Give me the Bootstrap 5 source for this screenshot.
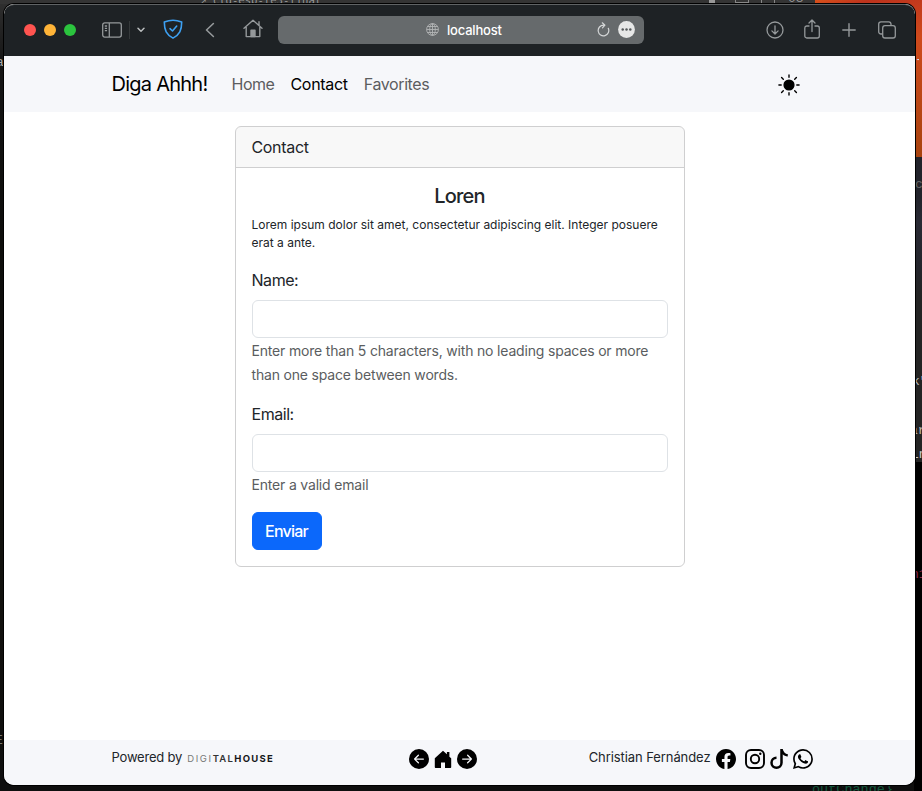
<!DOCTYPE html>
<html lang="en">
<head>
<meta charset="utf-8">
<meta name="viewport" content="width=device-width, initial-scale=1">
<title>Diga Ahhh! - Contact</title>
<link href="https://cdn.jsdelivr.net/npm/bootstrap@5.3.0/dist/css/bootstrap.min.css" rel="stylesheet">
<style>
body{font-family:Inter,"Liberation Sans",sans-serif;background:#0d0d0c;height:791px;overflow:hidden;letter-spacing:-.45px}
svg{display:block;flex:none}
.desktop{width:922px;height:791px;padding:4px 7px 6px 4px;background:linear-gradient(#303030 0,#151515 8%,#0d0d0b 30%,#12110d 70%,#0e0e0e 100%)}
.bg-piece{position:absolute;overflow:hidden;white-space:pre;font-family:"Liberation Mono",monospace;font-size:13px;letter-spacing:0;line-height:16px}
.bg-top{left:0;top:0;width:816px;height:4px;background:#343434}
.bg-orange{left:815px;top:0;width:107px;height:157px;background:linear-gradient(165deg,#d9521b,#bd331d 8%,#cf4a1c 35%,#a8430f)}
.bg-code{left:915px;top:157px;width:7px;height:305px;background:linear-gradient(#22232b 40px,#292a34 65px,#24252c 110px,#242424 140px)}
.bg-black{left:914px;top:462px;width:8px;height:329px;background:#010101}
.window-frame{position:relative;z-index:2;width:911px;height:781px;border-radius:10px;overflow:hidden;background:#fff;box-shadow:0 0 0 1px #000}
.toolbar{height:52px;background:#1e2225;padding:0 0 2px 20px;color:#95999b;border-top:1px solid #606365;border-radius:10px 10px 0 0}
.light{width:12px;height:12px;border-radius:50%;margin-right:8px}
.divider{width:1px;height:18px;background:#35393b;margin:0 7px}
.address{width:366px;height:28px;border-radius:6px;background:#666a6c;padding:0 9px 0 148px;color:#fff;font-size:13px;font-weight:500;letter-spacing:-.2px}
.address-text{padding-top:2px}
.page-bar{background:#f6f7fa}
.site-nav{height:56px;padding:0}
.site-nav .navbar-brand{font-size:20px;margin-right:16px;color:#000;letter-spacing:-.75px}
.site-nav .nav-link{color:#5c5d5f}
.site-nav .nav-link.active{color:#000;letter-spacing:-.3px}
.site-nav .nav-link:last-child{letter-spacing:-.4px}
.sun{margin:2px 8px 0 0}
.main-area{height:628px;padding-top:14px}
.contact-card{width:450px;--bs-card-border-color:#cfcfd0;color:#212529}
.card-header{letter-spacing:-.33px}
.contact-card .card-title{letter-spacing:-.8px}
.intro{font-size:12px;line-height:18px;color:#212529;letter-spacing:0}
.hint{font-size:14px;line-height:24px;color:#5a5d60;letter-spacing:-.18px;padding-top:1px;margin-bottom:-1px}
.form-label{line-height:24px}
.contact-card .form-control{border-color:#dee2e6}
.btn-send{--bs-btn-bg:#0b68fb;--bs-btn-border-color:#0b68fb;--bs-btn-font-weight:500;--bs-btn-padding-x:11px;width:70px;letter-spacing:-.75px;white-space:nowrap}
.site-footer{height:45px;font-size:13px;letter-spacing:0;color:#212529}
.powered{letter-spacing:-.2px;margin-top:-2px}
.author{letter-spacing:-.08px;margin-top:-1px}
.nav-icons{padding-right:45px}
.social{padding:0 7px 0 0}
.dh{font-size:9.5px;font-weight:700;letter-spacing:1.3px;line-height:12px;color:#17181a;margin-left:5px}
.dh .thin{font-weight:400;color:#777;letter-spacing:1.6px}
.dh .mid{font-weight:600;color:#333}
</style>
</head>
<body>
<div class="desktop">
  <div class="bg-piece bg-top"></div>
  <div class="bg-piece bg-orange"></div>
  <div class="bg-piece bg-code"></div>
  <div class="bg-piece bg-black"></div>
  <div class="bg-piece" style="left:200px;top:-8px;height:13px;color:#999;font-size:10.600px;font-family:'DejaVu Sans Mono',monospace">↗ ctd-esp-fe3-final</div>
  <div class="bg-piece" style="left:709px;top:0;height:3px;width:6px;background:#999"></div>
  <div class="bg-piece" style="left:735px;top:0;height:3px;width:14px;border:1px solid #888;border-top:0"></div>
  <div class="bg-piece" style="left:761px;top:0;height:3px;width:14px;border:solid #888;border-width:0 1px"></div>
  <div class="bg-piece" style="left:788px;top:-9px;height:14px;color:#999">08</div>
  <div class="bg-piece" style="left:-4px;top:55px;width:8px;color:#aaa">a</div>
  <div class="bg-piece" style="left:-5px;top:733px;width:8px;color:#777">E</div>
  <div class="bg-piece" style="left:915px;top:52px;width:4px;height:12px;color:#ddd">-</div>
  <div class="bg-piece" style="left:915px;top:177px;width:7px;color:#666">c</div>
  <div class="bg-piece" style="left:912px;top:374px;width:10px;color:#bbb">k"</div>
  <div class="bg-piece" style="left:910px;top:423px;width:12px;color:#bbb">ar</div>
  <div class="bg-piece" style="left:911px;top:447px;width:11px;color:#ccc">Ln</div>
  <div class="bg-piece" style="left:911px;top:567px;width:11px;color:#8c2446">n1</div>
  <div class="bg-piece" style="left:812px;top:782px;height:9px;color:#13593e;font-size:13.500px">outChange}</div>

  <div class="window-frame d-flex flex-column">
    <div class="toolbar d-flex align-items-center flex-shrink-0">
      <span class="light" style="background:#ff5450"></span>
      <span class="light" style="background:#ffb438"></span>
      <span class="light" style="background:#2bc43e"></span>
      <svg style="margin-left:18px" width="20" height="16" viewBox="0 0 20 16" fill="none" stroke="currentColor" stroke-width="1.3"><rect x=".7" y=".9" width="18.6" height="14.2" rx="2"/><path d="M7.3 1v14M2.8 4h2.3M2.8 6.3h2.3M2.8 8.6h2.3"/></svg>
      <span class="divider"></span>
      <svg width="8" height="6" viewBox="0 0 8 6" fill="none" stroke="#b9bcbd" stroke-width="1.5" stroke-linecap="round" stroke-linejoin="round"><path d="M1 1.3 4 4.3l3-3"/></svg>
      <svg style="margin-left:18px;margin-top:-1px" width="20" height="20" viewBox="0 0 20 20" fill="none" stroke="#3da0f2" stroke-width="1.6" stroke-linecap="round" stroke-linejoin="round"><path d="M10 1.300c2.700 0 5.400.5 8.700 1.800 0 8.200-2.100 12.700-8.700 16-6.600-3.300-8.700-7.800-8.700-16C4.600 1.800 7.300 1.300 10 1.300z"/><path d="m7 9.700 2.500 2.300 4.200-5"/></svg>
      <svg style="margin-left:22px" width="10" height="16" viewBox="0 0 10 16" fill="none" stroke="currentColor" stroke-width="1.6" stroke-linecap="round" stroke-linejoin="round"><path d="M8.400 1.500 1.500 8l6.900 6.500"/></svg>
      <svg style="margin:-2px 0 0 28px" width="20" height="19" viewBox="0 0 20 19" fill="none" stroke="currentColor" stroke-width="1.400" stroke-linecap="round" stroke-linejoin="round"><path d="M1 9.300 10 1.200l9 8.100M3.200 8v9.600h13.600V8M16 6V2.800"/><path d="M8 17.500v-6.300h4v6.300z" fill="currentColor"/></svg>
      <div class="address d-flex align-items-center" style="margin-left:15px">
        <svg width="13" height="13" viewBox="0 0 13 13" fill="none" stroke="#b2b4b6" stroke-width=".9"><circle cx="6.500" cy="6.500" r="5.900"/><ellipse cx="6.500" cy="6.500" rx="2.800" ry="5.900"/><path d="M6.500.6v11.800M.6 6.500h11.800M1.500 3.500h10M1.500 9.500h10"/></svg>
        <span class="ms-2 address-text">localhost</span>
        <svg class="ms-auto me-2" width="13" height="15" viewBox="0 0 13 15" fill="none" stroke="#d5d7d8" stroke-width="1.200" stroke-linecap="round" stroke-linejoin="round"><path d="M11.300 6.300A5.300 5.300 0 1 1 6.500 3.200M5.300.8l2.600 2.400-2.400 2.600"/></svg>
        <svg width="17" height="17" viewBox="0 0 17 17"><circle cx="8.500" cy="8.500" r="8.400" fill="#e6e7e7"/><g fill="#55595b"><circle cx="4.700" cy="8.500" r="1.250"/><circle cx="8.500" cy="8.500" r="1.250"/><circle cx="12.300" cy="8.500" r="1.250"/></g></svg>
      </div>
      <svg style="margin-left:122px" width="18" height="18" viewBox="0 0 18 18" fill="none" stroke="currentColor" stroke-width="1.300" stroke-linecap="round" stroke-linejoin="round"><circle cx="9" cy="9" r="8"/><path d="M9 4.800v8M5.900 9.900 9 13l3.100-3.100"/></svg>
      <svg style="margin-left:20px;margin-top:-2px" width="16" height="20" viewBox="0 0 16 20" fill="none" stroke="currentColor" stroke-width="1.300" stroke-linecap="round" stroke-linejoin="round"><path d="M5 7H2.700A2 2 0 0 0 .8 9v8a2 2 0 0 0 2 2h10.500a2 2 0 0 0 2-2V9a2 2 0 0 0-2-2H11M8 12.500V1.300M5 4l3-3 3 3"/></svg>
      <svg style="margin-left:22px" width="14" height="14" viewBox="0 0 14 14" fill="none" stroke="currentColor" stroke-width="1.400" stroke-linecap="round"><path d="M7 .8v12.400M.8 7h12.400"/></svg>
      <svg style="margin-left:22px" width="18" height="18" viewBox="0 0 18 18" fill="none" stroke="currentColor" stroke-width="1.300"><rect x="4.700" y="4.700" width="12.600" height="12.300" rx="2.300"/><path d="M4.500 13H3a2.300 2.300 0 0 1-2.300-2.300V3A2.300 2.300 0 0 1 3 .8h7.800A2.300 2.300 0 0 1 13 3v1.500"/></svg>
    </div>

    <nav class="navbar navbar-expand site-nav page-bar flex-shrink-0">
      <div class="container">
        <a class="navbar-brand" href="#">Diga Ahhh!</a>
        <div class="navbar-nav me-auto">
          <a class="nav-link" href="#">Home</a>
          <a class="nav-link active" href="#">Contact</a>
          <a class="nav-link" href="#">Favorites</a>
        </div>
        <svg class="sun" width="22" height="22" viewBox="0 0 22 22" stroke="#000" stroke-width="1.400" stroke-linecap="round"><circle cx="11" cy="11" r="4.900"/><path d="M11 .9v2.300M11 18.800v2.300M.9 11h2.300M18.800 11h2.300M3.600 3.600l1.700 1.700M16.700 16.700l1.700 1.700M18.400 3.600l-1.700 1.700M5.300 16.700l-1.700 1.700"/></svg>
      </div>
    </nav>

    <main class="main-area flex-shrink-0">
      <div class="card contact-card mx-auto">
        <div class="card-header">Contact</div>
        <div class="card-body">
          <h5 class="card-title text-center mb-2">Loren</h5>
          <p class="intro mb-3">Lorem ipsum dolor sit amet, consectetur adipiscing elit. Integer posuere erat a ante.</p>
          <form>
            <div class="mb-3">
              <label class="form-label" for="name">Name:</label>
              <input class="form-control" id="name" type="text">
              <div class="hint">Enter more than 5 characters, with no leading spaces or more than one space between words.</div>
            </div>
            <div class="mb-3">
              <label class="form-label" for="email">Email:</label>
              <input class="form-control" id="email" type="email">
              <div class="hint">Enter a valid email</div>
            </div>
            <button class="btn btn-primary btn-send" type="button">Enviar</button>
          </form>
        </div>
      </div>
    </main>

    <footer class="site-footer page-bar flex-shrink-0">
      <div class="container h-100">
        <div class="row h-100 align-items-center pb-2">
          <div class="col-4 d-flex align-items-center"><span class="powered">Powered by</span><span class="dh"><span class="thin">DIGI</span><span class="mid">TAL</span>HOUSE</span></div>
          <div class="col-4 d-flex justify-content-center gap-1 nav-icons">
            <svg width="20" height="20" viewBox="0 0 16 16"><path d="M8 0a8 8 0 1 0 0 16A8 8 0 0 0 8 0zm3.500 7.500a.5.5 0 0 1 0 1H5.707l2.147 2.146a.5.5 0 0 1-.708.708l-3-3a.5.5 0 0 1 0-.708l3-3a.5.5 0 1 1 .708.708L5.707 7.500H11.500z"/></svg>
            <svg width="20" height="20" viewBox="0 0 20 20"><path d="M10 1.800 1.800 9.300V18c0 .6.400 1 1 1H8v-5.500h4V19h5.200c.6 0 1-.4 1-1V9.300l-1.800-1.600V3h-2.500v2.200z"/></svg>
            <svg width="20" height="20" viewBox="0 0 16 16"><path transform="translate(16 0) scale(-1 1)" d="M8 0a8 8 0 1 0 0 16A8 8 0 0 0 8 0zm3.500 7.500a.5.5 0 0 1 0 1H5.707l2.147 2.146a.5.5 0 0 1-.708.708l-3-3a.5.5 0 0 1 0-.708l3-3a.5.5 0 1 1 .708.708L5.707 7.500H11.500z"/></svg>
          </div>
          <div class="col-4 d-flex align-items-center justify-content-end text-nowrap social">
            <span class="author">Christian Fernández</span>
            <svg style="margin-left:5px" width="20" height="20" viewBox="0 0 16 16"><path d="M16 8.049c0-4.446-3.582-8.050-8-8.050C3.580 0-.002 3.603-.002 8.050c0 4.017 2.926 7.347 6.750 7.951v-5.625h-2.030V8.050H6.750V6.275c0-2.017 1.195-3.131 3.022-3.131.876 0 1.791.157 1.791.157v1.980h-1.009c-.993 0-1.303.621-1.303 1.258v1.510h2.218l-.354 2.326H9.250V16c3.824-.604 6.750-3.934 6.750-7.951z"/></svg>
            <svg style="margin-left:9px" width="20" height="20" viewBox="0 0 20 20" fill="none" stroke="#000" stroke-width="1.900"><rect x="1" y="1" width="18" height="18" rx="5"/><circle cx="10" cy="10" r="4.200"/><circle cx="15.300" cy="4.700" r="1.200" fill="#000" stroke="none"/></svg>
            <svg class="ms-1" width="20" height="20" viewBox="0 0 16 16"><path d="M9 0h1.980c.144.715.54 1.617 1.235 2.512C12.895 3.389 13.797 4 15 4v2c-1.753 0-3.070-.814-4-1.829V11a5 5 0 1 1-5-5v2a3 3 0 1 0 3 3V0Z"/></svg>
            <svg class="ms-1" width="20" height="20" viewBox="0 0 16 16"><path d="M13.601 2.326A7.854 7.854 0 0 0 7.994 0C3.627 0 .068 3.558.064 7.926c0 1.399.366 2.760 1.057 3.965L0 16l4.204-1.102a7.933 7.933 0 0 0 3.790.965h.004c4.368 0 7.926-3.558 7.930-7.930A7.898 7.898 0 0 0 13.600 2.326zM7.994 14.521a6.573 6.573 0 0 1-3.356-.920l-.240-.144-2.494.654.666-2.433-.156-.251a6.560 6.560 0 0 1-1.007-3.505c0-3.626 2.957-6.584 6.591-6.584a6.560 6.560 0 0 1 4.660 1.931 6.557 6.557 0 0 1 1.928 4.660c-.004 3.639-2.961 6.592-6.592 6.592zm3.615-4.934c-.197-.099-1.170-.578-1.353-.646-.182-.065-.315-.099-.445.099-.133.197-.513.646-.627.775-.114.133-.232.148-.430.050-.197-.100-.836-.308-1.592-.985-.590-.525-.985-1.175-1.103-1.372-.114-.198-.011-.304.088-.403.087-.088.197-.232.296-.346.100-.114.133-.198.198-.330.065-.134.034-.248-.015-.347-.050-.099-.445-1.076-.612-1.470-.160-.389-.323-.335-.445-.340-.114-.007-.247-.007-.380-.007a.729.729 0 0 0-.529.247c-.182.198-.691.677-.691 1.654 0 .977.710 1.916.810 2.049.098.133 1.394 2.132 3.383 2.992.470.205.840.326 1.129.418.475.152.904.129 1.246.080.380-.058 1.171-.480 1.338-.943.164-.464.164-.860.114-.943-.049-.084-.182-.133-.380-.232z"/></svg>
          </div>
        </div>
      </div>
    </footer>
  </div>
</div>
<script src="https://cdn.jsdelivr.net/npm/bootstrap@5.3.0/dist/js/bootstrap.bundle.min.js"></script>
</body>
</html>
